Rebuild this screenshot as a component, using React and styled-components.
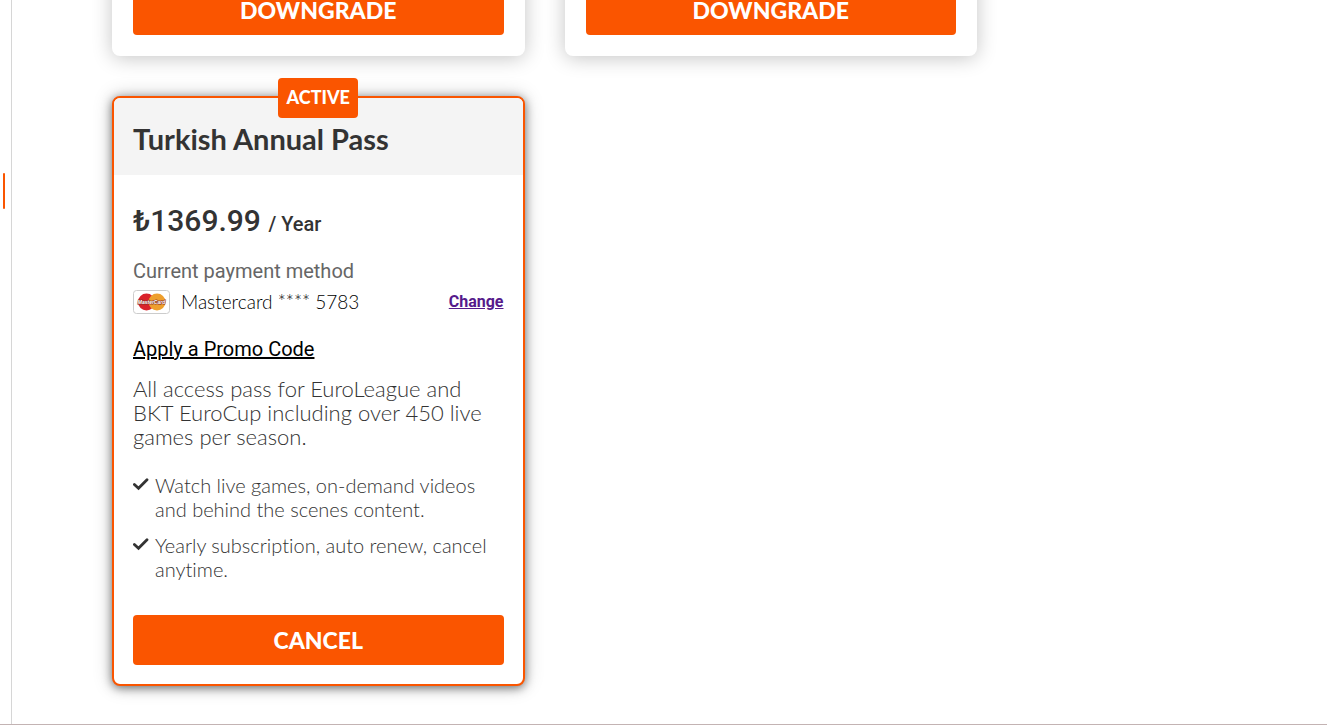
import React from "react";
import styled, { createGlobalStyle } from "styled-components";

const ORANGE = "#fa5500";

const GlobalStyle = createGlobalStyle`
  *, *::before, *::after { box-sizing: border-box; }
  body {
    margin: 0;
    background: #fff;
    color: #333;
    font-family: Lato, "Liberation Sans", sans-serif;
    font-variant-ligatures: none;
  }
`;

const Page = styled.div`
  display: flex;
  min-height: 100vh;
  overflow: hidden;
  border-bottom: 1px solid #c3b3b3;
`;

const Rail = styled.aside`
  flex: 0 0 12px;
  padding: 173px 0 0 3px;
  border-right: 1px solid #d6d6d6;
`;

const RailMarker = styled.div`
  width: 2px;
  height: 36px;
  border-radius: 1px;
  background: ${ORANGE};
`;

const Main = styled.main`
  flex: 1;
  padding: 0 100px 38px;
`;

const PlanGrid = styled.div`
  display: grid;
  grid-template-columns: repeat(2, minmax(0, 1fr));
  gap: 40px;
  max-width: 865px;
  margin-top: -36px;
`;

const Card = styled.section`
  position: relative;
  border: 2px solid ${(p) => (p.$active ? ORANGE : "transparent")};
  border-radius: 8px;
  background: #fff;
  box-shadow: ${(p) =>
    p.$active
      ? "0 0 20px rgba(0, 0, 0, 0.2), 0 2px 10px rgba(0, 0, 0, 0.5)"
      : "0 2px 20px rgba(0, 0, 0, 0.23)"};
`;

const Badge = styled.span`
  position: absolute;
  top: -20px;
  left: 50%;
  transform: translateX(-50%);
  width: 80px;
  border-radius: 4px;
  background: ${ORANGE};
  color: #fff;
  font-size: 18px;
  font-weight: 900;
  line-height: 38px;
  height: 40px;
  text-align: center;
`;

const CardHeader = styled.header`
  padding: 23px 19px 18px;
  border-radius: 6px 6px 0 0;
  background: #f4f4f4;
`;

const Title = styled.h2`
  margin: 0;
  font-size: 29px;
  font-weight: 700;
  line-height: 36px;
`;

const CardBody = styled.div`
  padding: ${(p) => (p.$compact ? "19px" : "27px 19px 19px")};
`;

const Price = styled.p`
  margin: 0 0 16px;
  font-family: Roboto, sans-serif;
  font-size: 30px;
  font-weight: 500;
  line-height: 38px;
`;

const Period = styled.span`
  font-size: 20px;
`;

const Label = styled.p`
  margin: 0 0 7px;
  color: #666;
  font-family: Roboto, sans-serif;
  font-size: 20px;
  line-height: 24px;
`;

const PaymentRow = styled.div`
  display: flex;
  align-items: center;
  gap: 11px;
  height: 24px;
  margin-bottom: 23px;
  color: #000;
  font-size: 19px;
  font-weight: 300;
  line-height: 24px;
`;

const CardBrand = styled.svg`
  flex: none;
  width: 37px;
  height: 24px;
`;

const BrandName = styled.text`
  font: italic 700 5px "Liberation Sans", sans-serif;
  fill: #fff;
  stroke: #8a3028;
  stroke-width: 1px;
  paint-order: stroke;
  text-anchor: middle;
`;

const ChangeLink = styled.a`
  margin-left: auto;
  color: #551a8b;
  font-family: Roboto, sans-serif;
  font-size: 16px;
  font-weight: 700;
`;

const PromoLink = styled.a`
  display: table;
  color: #000;
  font-family: Roboto, sans-serif;
  font-size: 20px;
  line-height: 24px;
`;

const Description = styled.p`
  margin: 16px 0 24px;
  font-size: 22px;
  font-weight: 300;
  line-height: 24px;
`;

const Features = styled.ul`
  display: flex;
  flex-direction: column;
  gap: 12px;
  margin: 0 0 34px;
  padding: 0;
  list-style: none;
`;

const Feature = styled.li`
  display: flex;
  gap: 6px;
  font-size: 20px;
  font-weight: 300;
  line-height: 24px;
`;

const Check = styled.svg`
  flex: none;
  width: 16px;
  height: 24px;
`;

const Action = styled.button`
  display: block;
  width: 100%;
  height: 50px;
  padding: 0;
  border: 0;
  border-radius: 4px;
  background: ${ORANGE};
  color: #fff;
  font-family: inherit;
  font-size: 23px;
  font-weight: 900;
  cursor: pointer;
`;

function Mastercard() {
  return (
    <CardBrand viewBox="0 0 37 24" role="img" aria-label="Mastercard">
      <rect x=".5" y=".5" width="36" height="23" rx="3" fill="#fff" stroke="#ccc" />
      <circle cx="13.5" cy="12" r="8.5" fill="#d9222a" />
      <circle cx="24" cy="12" r="8.5" fill="#ee9f2d" />
      <BrandName x="18.5" y="14">MasterCard</BrandName>
    </CardBrand>
  );
}

function CheckIcon() {
  return (
    <Check viewBox="0 0 16 24" aria-hidden="true">
      <path
        d="M1.400 11.500L5.500 15.300L14 6.700"
        fill="none"
        stroke="#333"
        strokeWidth="2.800"
        strokeLinecap="round"
      />
    </Check>
  );
}

const features = [
  "Watch live games, on-demand videos and behind the scenes content.",
  "Yearly subscription, auto renew, cancel anytime.",
];

function OtherPlan() {
  return (
    <Card>
      <CardBody $compact>
        <Action type="button">DOWNGRADE</Action>
      </CardBody>
    </Card>
  );
}

function ActivePlan() {
  return (
    <Card $active>
      <Badge>ACTIVE</Badge>
      <CardHeader>
        <Title>Turkish Annual Pass</Title>
      </CardHeader>
      <CardBody>
        <Price>
          ₺1369.99 <Period>/ Year</Period>
        </Price>
        <Label>Current payment method</Label>
        <PaymentRow>
          <Mastercard />
          <span>Mastercard **** 5783</span>
          <ChangeLink href="#change">Change</ChangeLink>
        </PaymentRow>
        <PromoLink href="#promo">Apply a Promo Code</PromoLink>
        <Description>
          All access pass for EuroLeague and BKT EuroCup including over 450 live games per season.
        </Description>
        <Features>
          {features.map((text) => (
            <Feature key={text}>
              <CheckIcon />
              <span>{text}</span>
            </Feature>
          ))}
        </Features>
        <Action type="button">CANCEL</Action>
      </CardBody>
    </Card>
  );
}

export default function App() {
  return (
    <>
      <GlobalStyle />
      <Page>
        <Rail>
          <RailMarker />
        </Rail>
        <Main>
          <PlanGrid>
            <OtherPlan />
            <OtherPlan />
            <ActivePlan />
          </PlanGrid>
        </Main>
      </Page>
    </>
  );
}
